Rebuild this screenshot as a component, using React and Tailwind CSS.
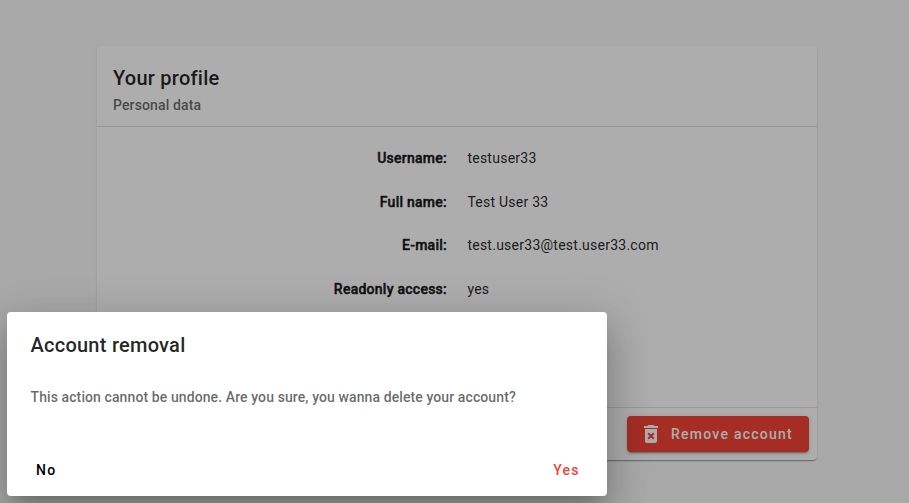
import React from "react";

const rows = [
  ["Username:", "testuser33"],
  ["Full name:", "Test User 33"],
  ["E-mail:", "test.user33@test.user33.com"],
  ["Readonly access:", "yes"],
];

const CARD_SHADOW =
  "shadow-[0_2px_1px_-1px_rgba(0,0,0,0.2),0_1px_1px_0_rgba(0,0,0,0.14),0_1px_3px_0_rgba(0,0,0,0.12)]";
const BUTTON_SHADOW =
  "shadow-[0_3px_1px_-2px_rgba(0,0,0,0.2),0_2px_2px_0_rgba(0,0,0,0.14),0_1px_5px_0_rgba(0,0,0,0.12)]";
const DIALOG_SHADOW =
  "shadow-[0_11px_15px_-7px_rgba(0,0,0,0.2),0_24px_38px_3px_rgba(0,0,0,0.14),0_9px_46px_8px_rgba(0,0,0,0.12)]";

function DeleteForeverIcon() {
  return (
    <svg viewBox="0 0 24 24" className="h-6 w-6" fill="currentColor">
      <path d="M6 19c0 1.1.9 2 2 2h8c1.1 0 2-.9 2-2V7H6v12zm2.46-7.12l1.41-1.41L12 12.59l2.12-2.12 1.41 1.41L13.41 14l2.12 2.12-1.41 1.41L12 15.41l-2.12 2.12-1.41-1.41L10.59 14l-2.13-2.12zM15.5 4l-1-1h-5l-1 1H5v2h14V4z" />
    </svg>
  );
}

function ProfileCard() {
  return (
    <section className={`flex h-[414px] w-[720px] flex-col rounded bg-white ${CARD_SHADOW}`}>
      <header className="h-[81px] border-b border-black/12 px-4 pt-4">
        <h1 className="text-[20px] leading-8 font-medium tracking-[0.0125em]">Your profile</h1>
        <p className="text-sm leading-[22px] font-medium tracking-[0.0094em] text-black/60">
          Personal data
        </p>
      </header>
      <dl className="flex-1 pt-[9px]">
        {rows.map(([label, value]) => (
          <div key={label} className="flex h-[43.75px] items-center text-sm">
            <dt className="w-[350px] text-right font-medium tracking-[0.0179em] [-webkit-text-stroke:0.5px_currentColor]">{label}</dt>
            <dd className="ml-[20.4px] tracking-[0.0179em]">{value}</dd>
          </div>
        ))}
      </dl>
      <footer className="flex h-[53px] justify-end border-t border-black/12 p-2">
        <button
          className={`flex h-9 w-[182px] items-center rounded bg-[#f44336] pl-3 text-sm font-medium tracking-[0.0893em] text-white ${BUTTON_SHADOW}`}
        >
          <DeleteForeverIcon />
          <span className="ml-2">Remove account</span>
        </button>
      </footer>
    </section>
  );
}

function RemovalDialog() {
  return (
    <div
      role="dialog"
      className={`absolute top-[312px] left-[7px] flex h-[184px] w-[600px] flex-col rounded bg-white ${DIALOG_SHADOW}`}
    >
      <h2 className="px-[23.5px] pt-[17px] text-[20px] leading-8 font-medium tracking-[0.0125em]">
        Account removal
      </h2>
      <p className="mt-[25px] px-[23.5px] text-sm leading-[22px] font-medium tracking-[0.0071em] text-black/60">
        This action cannot be undone. Are you sure, you wanna delete your account?
      </p>
      <div className="mt-auto flex h-[52px] items-center justify-between pr-[27.3px] pl-[29px] text-sm font-medium tracking-[0.0893em]">
        <button className="text-black">No</button>
        <button className="text-[#f44336]">Yes</button>
      </div>
    </div>
  );
}

export default function App() {
  return (
    <main className="relative h-[503px] w-[909px] overflow-hidden bg-[#fafafa] pt-[46px] pl-[97px] font-['Roboto',sans-serif] text-black/87">
      <ProfileCard />
      <div className="absolute inset-0 bg-black/32" />
      <RemovalDialog />
    </main>
  );
}
